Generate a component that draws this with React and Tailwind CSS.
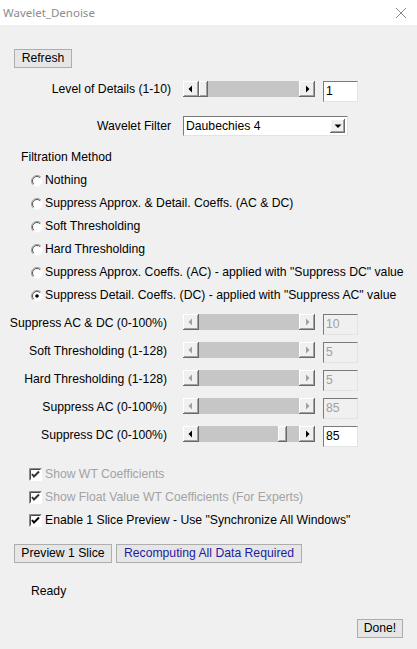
import React from "react";

const raised =
  "bg-[#f0f0f0] shadow-[inset_-1px_-1px_#696969,inset_1px_1px_#ffffff,inset_-2px_-2px_#a0a0a0]";

const Arrow = ({ dir, disabled }) => {
  const c = disabled ? "#a0a0a0" : "#000";
  return (
    <div className={`w-[16px] h-[16px] flex items-center justify-center ${raised}`}>
      <svg width="8" height="8" viewBox="0 0 8 8">
        {dir === "left" ? (
          <polygon points="5,0.5 5,7.5 1.5,4" fill={c} />
        ) : (
          <polygon points="3,0.5 3,7.5 6.5,4" fill={c} />
        )}
      </svg>
    </div>
  );
};

const Scrollbar = ({ disabled, thumb }) => (
  <div className="w-[132px] h-[16px] flex">
    <Arrow dir="left" disabled={disabled} />
    <div className="relative flex-1 bg-[#c6c6c6]">
      {!disabled && (
        <div
          className={`absolute top-0 w-[9px] h-[16px] ${raised}`}
          style={{ left: thumb }}
        />
      )}
    </div>
    <Arrow dir="right" disabled={disabled} />
  </div>
);

const TextBox = ({ value, disabled }) => (
  <div
    className={`w-[35px] h-[21px] border border-t-[#7a7a7a] border-l-[#7a7a7a] border-r-[#e3e3e3] border-b-[#e3e3e3] pl-[2px] leading-[19px] ${
      disabled ? "bg-[#f0f0f0] text-[#a0a0a0]" : "bg-white text-black"
    }`}
  >
    {value}
  </div>
);

const Radio = ({ checked, label }) => (
  <div className="h-[23px] flex items-center">
    <svg width="12" height="12" viewBox="0 0 12 12" className="shrink-0">
      <circle cx="6" cy="6" r="5.5" fill="#ffffff" />
      <path d="M2.1 9.9 A5.5 5.5 0 0 1 9.9 2.1" stroke="#9a9a9a" fill="none" />
      <path d="M2.8 9.2 A4.5 4.5 0 0 1 9.2 2.8" stroke="#555555" fill="none" />
      <path d="M9.9 2.1 A5.5 5.5 0 0 1 2.1 9.9" stroke="#f4f4f4" fill="none" />
      {checked && <circle cx="6" cy="6" r="1.8" fill="#000" />}
    </svg>
    <span className="ml-[2px] whitespace-nowrap">{label}</span>
  </div>
);

const Check = ({ label, disabled }) => (
  <div className="h-[23px] flex items-center">
    <svg width="13" height="13" viewBox="0 0 13 13" className="shrink-0">
      <rect x="0" y="0" width="13" height="13" fill="#ffffff" />
      <path d="M0.5 12.5 V0.5 H12.5" stroke="#8a8a8a" fill="none" />
      <path d="M1.5 11.5 V1.5 H11.5" stroke="#4a4a4a" fill="none" />
      <polyline
        points="3,6 5,8.5 10,3.5"
        stroke={disabled ? "#333" : "#000"}
        strokeWidth="2"
        fill="none"
      />
    </svg>
    <span className={`ml-[3px] whitespace-nowrap ${disabled ? "text-[#a3a3a3]" : ""}`}>{label}</span>
  </div>
);

const Btn = ({ children, className = "" }) => (
  <button
    className={`h-[19px] px-0 whitespace-nowrap bg-[#e6e6e6] border border-[#adadad] leading-[17px] ${className}`}
  >
    {children}
  </button>
);

const sliders = [
  ["Suppress AC & DC (0-100%)", "10", true],
  ["Soft Thresholding (1-128)", "5", true],
  ["Hard Thresholding (1-128)", "5", true],
  ["Suppress AC (0-100%)", "85", true],
  ["Suppress DC (0-100%)", "85", false],
];

export default function App() {
  return (
    <div className="w-[417px] h-[649px] bg-[#f0f0f0] text-[12.2px] text-black font-['Liberation_Sans',Arial,sans-serif] flex flex-col">
      <div className="h-[25px] bg-white flex items-center justify-between pl-[3px] pr-[10px]">
        <span className="font-['Noto_Sans',sans-serif] text-[11.5px] text-[#8c8c8c]">
          Wavelet_Denoise
        </span>
        <svg width="12" height="12" viewBox="0 0 12 12">
          <path d="M1 1 L11 11 M11 1 L1 11" stroke="#8c8c8c" strokeWidth="1" />
        </svg>
      </div>

      <div className="pt-[24px] flex flex-col">
        <div className="pl-[14px]">
          <Btn className="w-[58px] h-[17px] leading-[15px]">Refresh</Btn>
        </div>

        <div className="mt-[13px] flex items-start">
          <div className="w-[171px] text-right leading-[16px] whitespace-nowrap">Level of Details (1-10)</div>
          <div className="ml-[12px]">
            <Scrollbar thumb={0} />
          </div>
          <div className="ml-[8px]">
            <TextBox value="1" />
          </div>
        </div>

        <div className="mt-[14px] flex items-center">
          <div className="w-[171px] text-right">Wavelet Filter</div>
          <div className="ml-[12px] w-[165px] h-[20px] bg-white border border-t-[#7a7a7a] border-l-[#7a7a7a] border-r-[#e3e3e3] border-b-[#e3e3e3] flex items-center justify-between pl-[2px] pr-[2px]">
            <span>Daubechies 4</span>
            <div className={`w-[15px] h-[14px] flex items-center justify-center ${raised}`}>
              <svg width="8" height="6" viewBox="0 0 8 6">
                <polygon points="0.5,1.5 7.5,1.5 4,5" fill="#000" />
              </svg>
            </div>
          </div>
        </div>

        <div className="mt-[13px] pl-[21px] leading-[16px]">Filtration Method</div>

        <div className="mt-[4px] pl-[31px] flex flex-col">
          <Radio label="Nothing" />
          <Radio label="Suppress Approx. & Detail. Coeffs. (AC & DC)" />
          <Radio label="Soft Thresholding" />
          <Radio label="Hard Thresholding" />
          <Radio label={'Suppress Approx. Coeffs. (AC) - applied with "Suppress DC" value'} />
          <Radio checked label={'Suppress Detail. Coeffs. (DC) - applied with "Suppress AC" value'} />
        </div>

        <div className="mt-[7px] flex flex-col">
          {sliders.map(([label, val, dis]) => (
            <div key={label} className="h-[28px] flex items-start">
              <div className="w-[167px] text-right leading-[18px] whitespace-nowrap">{label}</div>
              <div className="ml-[16px]">
                <Scrollbar disabled={dis} thumb={79} />
              </div>
              <div className="ml-[8px]">
                <TextBox value={val} disabled={dis} />
              </div>
            </div>
          ))}
        </div>

        <div className="mt-[9px] pl-[29px] flex flex-col">
          <Check disabled label="Show WT Coefficients" />
          <Check disabled label="Show Float Value WT Coefficients (For Experts)" />
          <Check label={'Enable 1 Slice Preview - Use "Synchronize All Windows"'} />
        </div>

        <div className="mt-[12px] pl-[14px] flex gap-[4px]">
          <Btn className="w-[98px]">Preview 1 Slice</Btn>
          <Btn className="w-[186px] text-[#1c1ca0]">Recomputing All Data Required</Btn>
        </div>

        <div className="mt-[20px] pl-[31px] leading-[16px]">Ready</div>

        <div className="mt-[20px] pr-[14px] flex justify-end">
          <Btn className="w-[46px] h-[18px] leading-[16px]">Done!</Btn>
        </div>
      </div>
    </div>
  );
}
